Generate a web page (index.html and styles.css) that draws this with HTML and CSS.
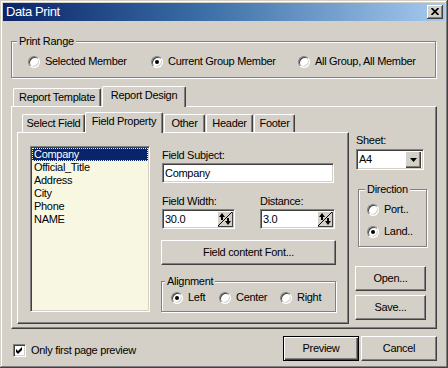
FILE: index.html
```html
<!DOCTYPE html>
<html>
<head>
<meta charset="utf-8">
<title>Data Print</title>
<link rel="stylesheet" href="styles.css">
</head>
<body>
<div class="window">
  <div class="titlebar">
    <span class="title">Data Print</span>
    <span class="close"><svg width="8" height="7" viewBox="0 0 8 7"><path d="M0.5 0 L7.5 7 M7.5 0 L0.5 7" stroke="#000" stroke-width="1.7"/></svg></span>
  </div>
  <div class="client">
    <fieldset class="group range">
      <legend>Print Range</legend>
      <div class="opts range-opts">
        <div class="opt"><span class="radio"></span><span>Selected Member</span></div>
        <div class="opt"><span class="radio on"></span><span>Current Group Member</span></div>
        <div class="opt"><span class="radio"></span><span>All Group, All Member</span></div>
      </div>
    </fieldset>

    <div class="tabs outer-tabs">
      <div class="tab t-template">Report Template</div>
      <div class="tab active t-design">Report Design</div>
    </div>
    <div class="panel outer-panel">
      <div class="design-main">
        <div class="tabs inner-tabs">
          <div class="tab t-select">Select Field</div>
          <div class="tab active t-prop">Field Property</div>
          <div class="tab t-other">Other</div>
          <div class="tab t-header">Header</div>
          <div class="tab t-footer">Footer</div>
        </div>
        <div class="panel inner-panel">
          <ul class="listbox">
            <li class="sel">Company</li>
            <li>Official_Title</li>
            <li>Address</li>
            <li>City</li>
            <li>Phone</li>
            <li>NAME</li>
          </ul>
          <div class="props">
            <div class="lbl">Field Subject:</div>
            <div class="edit subject">Company</div>
            <div class="pair">
              <div class="pcol">
                <div class="lbl">Field Width:</div>
                <div class="spin w-width">
                  <span class="val">30.0</span>
                  <span class="spinbtn"><svg width="16" height="16" viewBox="0 0 16 16"><path d="M1 15 L15 1" stroke="#000" stroke-width="1"/><path d="M5 2 L2 6 H4 V9 H6 V6 H8 Z" fill="#000"/><path d="M11 14 L14 10 H12 V7 H10 V10 H8 Z" fill="#000"/></svg></span>
                </div>
              </div>
              <div class="pcol">
                <div class="lbl">Distance:</div>
                <div class="spin w-dist">
                  <span class="val">3.0</span>
                  <span class="spinbtn"><svg width="16" height="16" viewBox="0 0 16 16"><path d="M1 15 L15 1" stroke="#000" stroke-width="1"/><path d="M5 2 L2 6 H4 V9 H6 V6 H8 Z" fill="#000"/><path d="M11 14 L14 10 H12 V7 H10 V10 H8 Z" fill="#000"/></svg></span>
                </div>
              </div>
            </div>
            <div class="btn font-btn">Field content Font...</div>
            <fieldset class="group align">
              <legend>Alignment</legend>
              <div class="opts align-opts">
                <div class="opt"><span class="radio on"></span><span>Left</span></div>
                <div class="opt"><span class="radio"></span><span>Center</span></div>
                <div class="opt"><span class="radio"></span><span>Right</span></div>
              </div>
            </fieldset>
          </div>
        </div>
      </div>
      <div class="side">
        <div class="lbl">Sheet:</div>
        <div class="combo">
          <span class="val">A4</span>
          <span class="dropbtn"><svg width="7" height="4" viewBox="0 0 7 4"><path d="M0 0 H7 L3.5 4 Z" fill="#000"/></svg></span>
        </div>
        <fieldset class="group direction">
          <legend>Direction</legend>
          <div class="dir-opts">
            <div class="opt"><span class="radio"></span><span>Port..</span></div>
            <div class="opt"><span class="radio on"></span><span>Land..</span></div>
          </div>
        </fieldset>
        <div class="btn side-btn open-btn">Open...</div>
        <div class="btn side-btn">Save...</div>
      </div>
    </div>

    <div class="footer">
      <div class="check-opt">
        <span class="checkbox"><svg width="9" height="9" viewBox="0 0 9 9"><path d="M1 3 L3 5 L7 1 V4 L3 8 L1 6 Z" fill="#000"/></svg></span>
        <span>Only first page preview</span>
      </div>
      <div class="btn default-btn">Preview</div>
      <div class="btn foot-btn">Cancel</div>
    </div>
  </div>
</div>
</body>
</html>
```

FILE: styles.css
```css
* { box-sizing: border-box; }
html, body { margin: 0; padding: 0; }
body {
  width: 448px;
  height: 368px;
  overflow: hidden;
  background: #d4d0c8;
  font-family: "Liberation Sans", Arial, sans-serif;
  font-size: 11px;
  letter-spacing: -0.3px;
  line-height: 13px;
  color: #000;
}

.window {
  width: 448px;
  height: 368px;
  padding: 3px;
  background: #d4d0c8;
  box-shadow: inset -1px -1px 0 #404040, inset 1px 1px 0 #d4d0c8,
              inset -2px -2px 0 #808080, inset 2px 2px 0 #fff;
  display: flex;
  flex-direction: column;
}

.titlebar {
  height: 18px;
  flex: none;
  display: flex;
  align-items: center;
  justify-content: space-between;
  padding: 0 2px 0 3px;
  background: linear-gradient(to right, #0a246a 0%, #3a6ea5 45%, #a6caf0 100%);
  color: #fff;
  font-size: 13px;
  letter-spacing: -0.4px;
  line-height: 16px;
}
.close {
  width: 16px;
  height: 14px;
  background: #d4d0c8;
  box-shadow: inset -1px -1px 0 #404040, inset 1px 1px 0 #fff, inset -2px -2px 0 #808080;
  display: flex;
  align-items: center;
  justify-content: center;
  padding-bottom: 1px;
}
.close svg { display: block; }

.client {
  flex: 1;
  padding: 0 8px;
  display: flex;
  flex-direction: column;
}

/* group boxes */
.group {
  margin: 0;
  padding: 0;
  min-width: 0;
  border: 1px solid #808080;
  box-shadow: inset 1px 1px 0 #fff, 1px 1px 0 #fff;
}
.group legend {
  padding: 0 2px;
  height: 13px;
  line-height: 13px;
  background: #d4d0c8;
}

.range { margin: 14px 1px 0 0; }
.range legend { margin-left: 5px; }
.opts { display: grid; }
.range-opts {
  grid-template-columns: 123px 147px auto;
  padding: 7px 0 9px 16px;
}
.opt {
  display: flex;
  align-items: center;
  gap: 5px;
  height: 13px;
  white-space: nowrap;
}

.radio {
  width: 12px;
  height: 12px;
  flex: none;
  border-radius: 50%;
  background: #fff;
  border: 1px solid;
  border-color: #808080 #fff #fff #808080;
  box-shadow: inset 1px 1px 0 #404040, inset -1px -1px 0 #d4d0c8;
  position: relative;
}
.radio.on::after {
  content: "";
  position: absolute;
  left: 3px;
  top: 3px;
  width: 4px;
  height: 4px;
  border-radius: 50%;
  background: #000;
}

/* tabs */
.tabs {
  display: flex;
  align-items: flex-end;
  height: 20px;
  flex: none;
  position: relative;
  z-index: 1;
}
.tab {
  height: 18px;
  border: 1px solid #fff;
  border-bottom: none;
  border-right-color: #404040;
  border-radius: 2px 2px 0 0;
  box-shadow: inset -1px 0 0 #808080;
  padding-top: 2px;
  text-align: center;
  white-space: nowrap;
  background: #d4d0c8;
}
.tab.active {
  height: 21px;
  margin-bottom: -1px;
}
.outer-tabs { margin-top: 8px; padding-left: 2px; }
.t-template { width: 88px; }
.t-design { width: 84px; margin-left: 1px; }

.inner-tabs { padding-left: 5px; }
.t-select { width: 63px; }
.t-prop { width: 78px; }
.t-other { width: 41px; margin-left: 1px; }
.t-header { width: 47px; margin-left: 1px; }
.t-footer { width: 41px; margin-left: 1px; }

.panel {
  border: 1px solid;
  border-color: #fff #404040 #404040 #fff;
  box-shadow: inset -1px -1px 0 #808080;
}
.outer-panel {
  height: 223px;
  flex: none;
  display: grid;
  grid-template-columns: 332px 1fr;
  padding: 5px 0 4px 5px;
}
.design-main {
  display: flex;
  flex-direction: column;
}
.inner-panel {
  height: 192px;
  display: flex;
  align-items: flex-start;
  gap: 11px;
  padding: 13px 0 0 12px;
}

.listbox {
  list-style: none;
  margin: 0;
  padding: 1px;
  width: 120px;
  height: 166px;
  flex: none;
  background: #f8f8e2;
  border: 1px solid;
  border-color: #808080 #fff #fff #808080;
  box-shadow: inset 1px 1px 0 #404040, inset -1px -1px 0 #d4d0c8;
}
.listbox li {
  height: 13px;
  line-height: 13px;
  padding-left: 2px;
  white-space: nowrap;
}
.listbox li.sel {
  background: #0a246a;
  color: #fff;
  outline: 1px dotted #f4f0b8;
  outline-offset: -1px;
}

.props {
  width: 175px;
  flex: none;
  padding-top: 3px;
  display: flex;
  flex-direction: column;
}
.lbl {
  height: 13px;
  padding-left: 1px;
  margin-bottom: 1px;
  white-space: nowrap;
}
.edit, .spin, .combo {
  height: 20px;
  background: #fff;
  border: 1px solid;
  border-color: #808080 #fff #fff #808080;
  box-shadow: inset 1px 1px 0 #404040, inset -1px -1px 0 #d4d0c8;
  display: flex;
  align-items: center;
  padding: 0 1px 0 2px;
}
.subject { width: 172px; margin-left: 1px; }
.pair {
  display: grid;
  grid-template-columns: 98px auto;
  margin-top: 12px;
}
.spin { margin-left: 1px; padding: 1px 1px 1px 2px; }
.spin .val, .combo .val { flex: 1; }
.w-width { width: 73px; }
.w-dist { width: 75px; }
.spinbtn {
  width: 16px;
  height: 16px;
  flex: none;
  background: #d4d0c8;
  box-shadow: inset 1px 1px 0 #fff, inset -1px -1px 0 #404040;
}
.spinbtn svg { display: block; }

.btn {
  height: 25px;
  border: 1px solid;
  border-color: #fff #404040 #404040 #fff;
  box-shadow: inset -1px -1px 0 #808080;
  display: flex;
  align-items: center;
  justify-content: center;
  white-space: nowrap;
}
.font-btn { width: 175px; margin-top: 11px; }

.align { width: 175px; margin-top: 10px; }
.align legend { margin-left: 3px; }
.align-opts {
  grid-template-columns: 48px 61px auto;
  padding: 3px 0 7px 9px;
}

/* side column */
.side {
  padding: 22px 0 0 6px;
  display: flex;
  flex-direction: column;
  align-items: flex-start;
}
.side .lbl { margin-bottom: 2px; }
.combo {
  width: 68px;
  height: 21px;
  margin-left: 1px;
  padding: 2px 2px 2px 2px;
}
.dropbtn {
  width: 16px;
  height: 17px;
  flex: none;
  background: #d4d0c8;
  box-shadow: inset 1px 1px 0 #fff, inset -1px -1px 0 #404040, inset -2px -2px 0 #808080;
  display: flex;
  align-items: center;
  justify-content: center;
}
.dropbtn svg { display: block; }
.direction { width: 69px; margin-top: 13px; margin-left: 3px; }
.direction legend { margin-left: 6px; }
.dir-opts {
  display: flex;
  flex-direction: column;
  gap: 9px;
  padding: 7px 0 8px 8px;
}
.side-btn { width: 71px; }
.open-btn { margin-top: 19px; }
.side-btn + .side-btn { margin-top: 4px; }

/* footer */
.footer {
  display: flex;
  align-items: flex-start;
  margin-top: 7px;
}
.check-opt {
  display: flex;
  align-items: center;
  gap: 5px;
  margin: 8px 0 0 2px;
  height: 13px;
  flex: 1;
}
.checkbox {
  width: 13px;
  height: 13px;
  flex: none;
  background: #fff;
  border: 1px solid;
  border-color: #808080 #fff #fff #808080;
  box-shadow: inset 1px 1px 0 #404040, inset -1px -1px 0 #d4d0c8;
  display: flex;
  align-items: center;
  justify-content: center;
}
.checkbox svg { display: block; }
.default-btn {
  width: 76px;
  border: 1px solid #000;
  box-shadow: inset 1px 1px 0 #fff, inset -1px -1px 0 #404040, inset -2px -2px 0 #808080;
}
.foot-btn { width: 76px; margin-left: 2px; }
```
